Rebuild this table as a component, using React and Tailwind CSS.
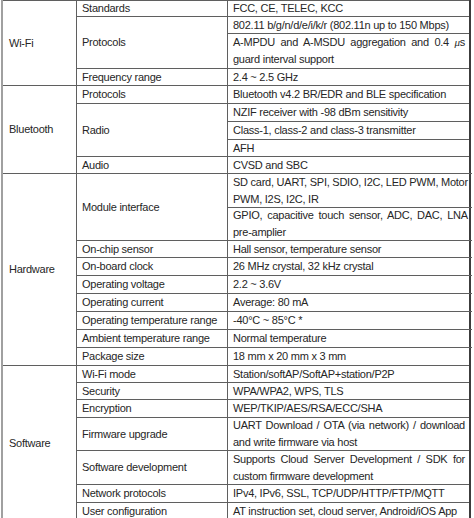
import React from "react";

const SECTIONS = [
  {
    name: "Wi-Fi",
    rows: [
      { label: "Standards", items: [{ h: 16, lines: ["FCC, CE, TELEC, KCC"] }] },
      {
        label: "Protocols",
        items: [
          { h: 17, lines: ["802.11 b/g/n/d/e/i/k/r (802.11n up to 150 Mbps)"] },
          {
            h: 35,
            lines: [
              <>
                A-MPDU and A-MSDU aggregation and 0.4 <i className="font-serif">μ</i>s
              </>,
              "guard interval support",
            ],
          },
        ],
      },
      { label: "Frequency range", items: [{ h: 17, lines: ["2.4 ~ 2.5 GHz"] }] },
    ],
  },
  {
    name: "Bluetooth",
    rows: [
      { label: "Protocols", items: [{ h: 18, lines: ["Bluetooth v4.2 BR/EDR and BLE specification"] }] },
      {
        label: "Radio",
        items: [
          { h: 18, lines: ["NZIF receiver with -98 dBm sensitivity"] },
          { h: 18, lines: ["Class-1, class-2 and class-3 transmitter"] },
          { h: 17, lines: ["AFH"] },
        ],
      },
      { label: "Audio", items: [{ h: 17, lines: ["CVSD and SBC"] }] },
    ],
  },
  {
    name: "Hardware",
    rows: [
      {
        label: "Module interface",
        items: [
          { h: 34, lines: ["SD card, UART, SPI, SDIO, I2C, LED PWM, Motor", "PWM, I2S, I2C, IR"] },
          { h: 33, lines: ["GPIO, capacitive touch sensor, ADC, DAC, LNA", "pre-amplier"] },
        ],
      },
      { label: "On-chip sensor", items: [{ h: 17, lines: ["Hall sensor, temperature sensor"] }] },
      { label: "On-board clock", items: [{ h: 18, lines: ["26 MHz crystal, 32 kHz crystal"] }] },
      { label: "Operating voltage", items: [{ h: 18, lines: ["2.2 ~ 3.6V"] }] },
      { label: "Operating current", items: [{ h: 18, lines: ["Average: 80 mA"] }] },
      { label: "Operating temperature range", items: [{ h: 18, lines: ["-40°C ~ 85°C *"] }] },
      { label: "Ambient temperature range", items: [{ h: 18, lines: ["Normal temperature"] }] },
      { label: "Package size", items: [{ h: 18, lines: ["18 mm x 20 mm x 3 mm"] }] },
    ],
  },
  {
    name: "Software",
    rows: [
      { label: "Wi-Fi mode", items: [{ h: 17, lines: ["Station/softAP/SoftAP+station/P2P"] }] },
      { label: "Security", items: [{ h: 17, lines: ["WPA/WPA2, WPS, TLS"] }] },
      { label: "Encryption", items: [{ h: 18, lines: ["WEP/TKIP/AES/RSA/ECC/SHA"] }] },
      {
        label: "Firmware upgrade",
        items: [{ h: 33, lines: ["UART Download / OTA (via network) / download", "and write firmware via host"] }],
      },
      {
        label: "Software development",
        items: [{ h: 34, lines: ["Supports Cloud Server Development / SDK for", "custom firmware development"] }],
      },
      { label: "Network protocols", items: [{ h: 18, lines: ["IPv4, IPv6, SSL, TCP/UDP/HTTP/FTP/MQTT"] }] },
      { label: "User configuration", items: [{ h: 18, lines: ["AT instruction set, cloud server, Android/iOS App"] }] },
    ],
  },
];

function ValueCell({ item }) {
  const multi = item.lines.length > 1;
  return (
    <div
      className="border-t border-[#5f5f5f] pl-[5px] pr-[4px] flex flex-col justify-center overflow-hidden"
      style={{ height: item.h }}
    >
      {item.lines.map((line, i) => (
        <div
          key={i}
          className={
            multi
              ? i < item.lines.length - 1
                ? "leading-[17px] whitespace-nowrap text-justify [text-align-last:justify]"
                : "leading-[17px] whitespace-nowrap"
              : "whitespace-nowrap"
          }
        >
          {line}
        </div>
      ))}
    </div>
  );
}

export default function App() {
  return (
    <div
      className="w-[474px] h-[518px] overflow-hidden bg-white text-[11px] leading-[15px] tracking-[-0.25px] text-[#262626]"
      style={{ fontFamily: '"Liberation Sans", Arial, sans-serif' }}
    >
      <div className="ml-[1px] w-[470px] border-l-2 border-r-2 border-l-[#a0a0a0] border-r-[#3c3c3c]">
        {SECTIONS.map((sec) => (
          <div key={sec.name} className="flex">
            <div className="w-[74px] shrink-0 border-t border-r border-[#5f5f5f] pl-[6px] flex items-center">
              {sec.name}
            </div>
            <div className="flex-1 flex flex-col">
              {sec.rows.map((row) => (
                <div key={row.label} className="flex">
                  <div className="w-[151px] shrink-0 border-t border-r border-[#5f5f5f] pl-[5px] flex items-center whitespace-nowrap">
                    {row.label}
                  </div>
                  <div className="flex-1 min-w-0 flex flex-col">
                    {row.items.map((item, i) => (
                      <ValueCell key={i} item={item} />
                    ))}
                  </div>
                </div>
              ))}
            </div>
          </div>
        ))}
      </div>
    </div>
  );
}
